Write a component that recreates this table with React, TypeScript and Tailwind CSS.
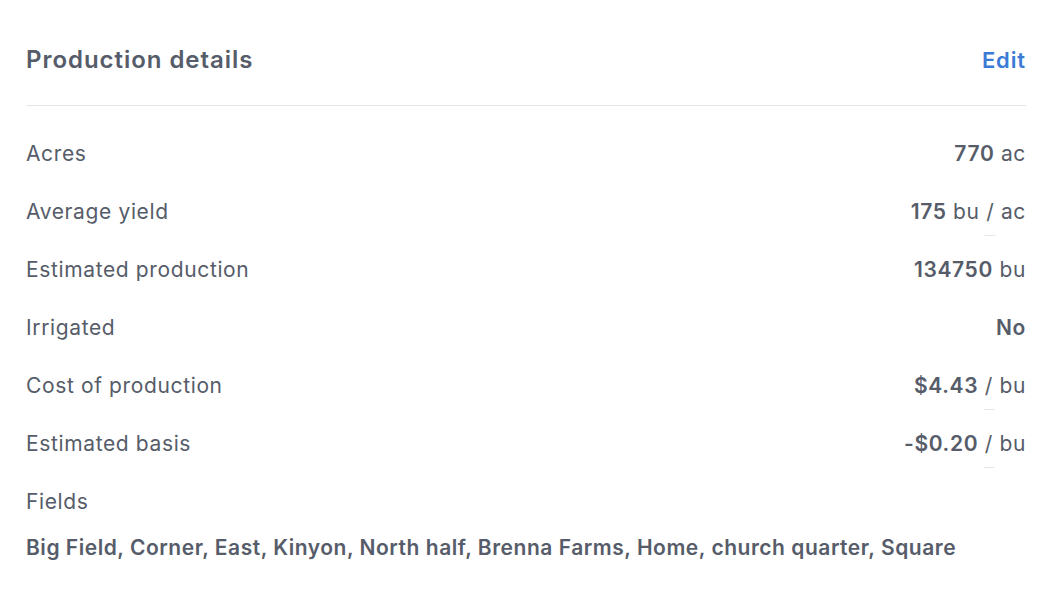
import React from 'react';

type Row = {
    label: string;
    value: string;
    unit?: string;
    per?: string;
};

const rows: Row[] = [
    { label: 'Acres', value: '770', unit: 'ac' },
    { label: 'Average yield', value: '175', unit: 'bu', per: 'ac' },
    { label: 'Estimated production', value: '134750', unit: 'bu' },
    { label: 'Irrigated', value: 'No' },
    { label: 'Cost of production', value: '$4.43', per: 'bu' },
    { label: 'Estimated basis', value: '-$0.20', per: 'bu' },
];

function Value({ row }: { row: Row }) {
    return (
        <div className="text-[21px] leading-[28px] tracking-[0.03em]">
            <span className="font-semibold">{row.value}</span>
            {row.unit && <span> {row.unit}</span>}
            {row.per && (
                <>
                    {' '}
                    <span className="relative inline-block">
                        /
                        {/* faint marker under the slash */}
                        <span className="absolute left-1/2 top-[37px] w-[11px] -translate-x-1/2 border-t border-[#e3e6ea]"></span>
                    </span>
                    <span> {row.per}</span>
                </>
            )}
        </div>
    );
}

export default function App() {
    return (
        <div className="min-h-screen bg-white px-[26px] text-[#565c69]" style={{ fontFamily: 'Inter, "Noto Sans", sans-serif' }}>
            <div className="flex items-center justify-between border-b border-[#e5e7eb] pt-[41px] pb-[26px]">
                <h2 className="text-[24px] leading-[38px] font-semibold tracking-[0.04em]">Production details</h2>
                <button className="text-[22px] leading-[38px] font-semibold tracking-[0.04em] text-[#3b7bd6] cursor-pointer">Edit</button>
            </div>

            <div className="pt-[19px]">
                {rows.map(row => (
                    <div key={row.label} className="flex items-center justify-between py-[15px]">
                        <span className="text-[21px] leading-[28px] tracking-[0.03em]">{row.label}</span>
                        <Value row={row} />
                    </div>
                ))}
                <div className="py-[15px]">
                    <div className="text-[21px] leading-[28px] tracking-[0.03em]">Fields</div>
                    <div className="mt-[18px] text-[21px] leading-[28px] font-semibold tracking-[0.025em]">
                        Big Field, Corner, East, Kinyon, North half, Brenna Farms, Home, church quarter, Square
                    </div>
                </div>
            </div>
        </div>
    );
}
